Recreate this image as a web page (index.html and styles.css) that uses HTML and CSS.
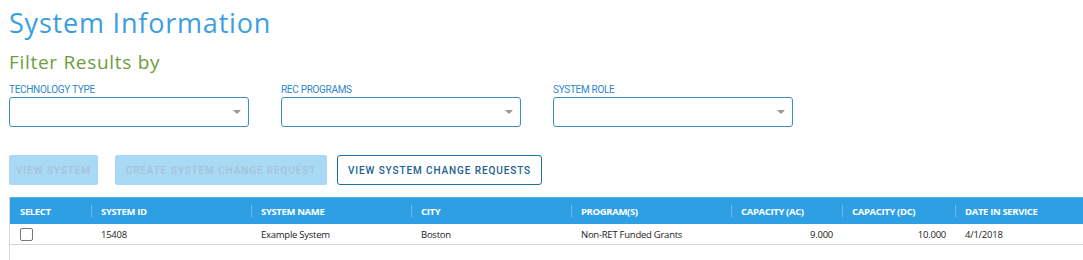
FILE: index.html
```html
<!DOCTYPE html>
<html>
<head>
<meta charset="utf-8">
<link rel="stylesheet" href="styles.css">
</head>
<body>
<div class="page">
  <h1 class="title">System Information</h1>
  <h2 class="subtitle">Filter Results by</h2>
  <div class="filters">
    <div class="field">
      <label class="label">TECHNOLOGY TYPE</label>
      <div class="select"><span class="caret"></span></div>
    </div>
    <div class="field">
      <label class="label">REC PROGRAMS</label>
      <div class="select"><span class="caret"></span></div>
    </div>
    <div class="field">
      <label class="label">SYSTEM ROLE</label>
      <div class="select"><span class="caret"></span></div>
    </div>
  </div>
  <div class="actions">
    <button class="btn btn-disabled w1">VIEW SYSTEM</button>
    <button class="btn btn-disabled w2">CREATE SYSTEM CHANGE REQUEST</button>
    <button class="btn btn-outline w3">VIEW SYSTEM CHANGE REQUESTS</button>
  </div>
  <div class="grid">
    <div class="row head">
      <div class="cell c1">SELECT</div>
      <div class="cell c2">SYSTEM ID</div>
      <div class="cell c3">SYSTEM NAME</div>
      <div class="cell c4">CITY</div>
      <div class="cell c5">PROGRAM(S)</div>
      <div class="cell c6">CAPACITY (AC)</div>
      <div class="cell c7">CAPACITY (DC)</div>
      <div class="cell c8">DATE IN SERVICE</div>
    </div>
    <div class="row body">
      <div class="cell c1"><span class="checkbox"></span></div>
      <div class="cell c2">15408</div>
      <div class="cell c3">Example System</div>
      <div class="cell c4">Boston</div>
      <div class="cell c5">Non-RET Funded Grants</div>
      <div class="cell c6 num">9.000</div>
      <div class="cell c7 num">10.000</div>
      <div class="cell c8">4/1/2018</div>
    </div>
    <div class="empty"></div>
  </div>
</div>
</body>
</html>
```

FILE: styles.css
```css
* { box-sizing: border-box; }
html, body { margin: 0; padding: 0; background: #fff; }
body { overflow: hidden; }
.page { padding: 0 0 0 9px; }
.title {
  margin: 0;
  padding-top: 5px;
  font-family: "Open Sans", sans-serif;
  font-weight: 400;
  font-size: 27px;
  line-height: 36px;
  color: #3a9ee0;
  letter-spacing: 0.8px;
}
.subtitle {
  margin: 0;
  padding-top: 9px;
  font-family: "Open Sans", sans-serif;
  font-weight: 400;
  font-size: 19px;
  line-height: 24px;
  color: #6c9e3c;
  letter-spacing: 0.7px;
}
.filters { display: flex; gap: 32px; margin-top: 10px; }
.field { display: flex; flex-direction: column; width: 240px; }
.label {
  font-family: Roboto, sans-serif;
  font-size: 10px;
  line-height: 12px;
  color: #2f87c8;
  letter-spacing: -0.3px;
  height: 13px;
}
.select {
  position: relative;
  height: 30px;
  border: 1px solid #3b8fc4;
  border-radius: 3px;
  background: #fff;
}
.caret {
  position: absolute;
  right: 7px;
  top: 12px;
  width: 0; height: 0;
  border-left: 4px solid transparent;
  border-right: 4px solid transparent;
  border-top: 4px solid #999;
}
.actions { display: flex; margin-top: 28px; }
.btn {
  height: 30px;
  font-family: Roboto, sans-serif;
  font-size: 10px;
  font-weight: 500;
  letter-spacing: 0.9px;
  border-radius: 2px;
  padding: 0;
  text-align: center;
}
.btn-disabled { background: #a8d9f5; border: 1px solid #a8d9f5; color: #a5c3d8; }
.btn-outline { background: #fff; border: 1px solid #1e6fa6; color: #22608f; border-radius: 3px; }
.w1 { width: 89px; }
.w2 { width: 212px; margin-left: 17px; }
.w3 { width: 205px; margin-left: 10px; }
.grid { margin-top: 12px; border-left: 1px solid #d6d6d6; }
.row { display: flex; }
.head { background: #2e9fe3; height: 27px; border-top: 1px solid #54b2ea; }
.cell {
  font-family: "Open Sans", sans-serif;
  font-size: 9.5px;
  padding-left: 10px;
  display: flex;
  align-items: center;
  white-space: nowrap;
  letter-spacing: -0.25px;
}
.head .cell { color: #fff; font-weight: 700; position: relative; letter-spacing: -0.35px; }
.head .cell + .cell::before {
  content: "";
  position: absolute;
  left: 0; top: 7px; bottom: 7px;
  width: 1px;
  background: #6cbdee;
}
.body { height: 21px; border-bottom: 1px solid #d4d4d4; }
.body .cell { color: #222; }
.c1 { width: 81px; }
.c2 { width: 160px; }
.c3 { width: 160px; }
.c4 { width: 160px; }
.c5 { width: 160px; }
.c6 { width: 111px; }
.c7 { width: 113px; }
.c8 { width: 126px; }
.num { justify-content: flex-end; padding-right: 9px; }
.checkbox {
  width: 13px; height: 13px;
  border: 1px solid #767676;
  border-radius: 2px;
  background: #fff;
}
.empty { height: 20px; }
```
